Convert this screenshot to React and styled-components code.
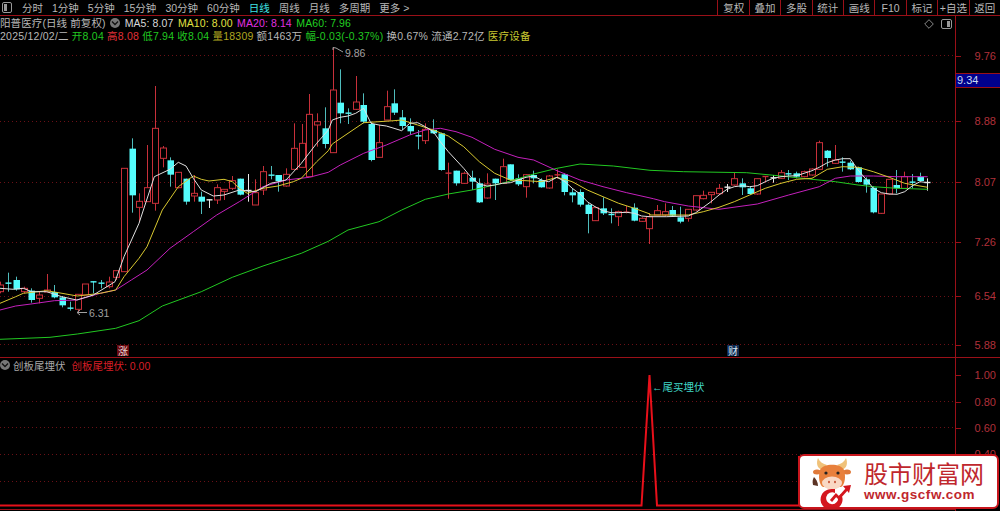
import React from 'react'
import styled, { createGlobalStyle } from 'styled-components'

const GlobalStyle = createGlobalStyle`
	html, body {
		margin: 0;
		background: #000;
	}
	body {
		font-family: 'Liberation Sans', 'Noto Sans CJK SC', sans-serif;
	}
`

const RED_LINE = '#9a1018'
const GRID = '#6a1016'
const STEP = 7.725

// candles read off the chart: [body top, body bottom, high, low, kind]
const candlesA = [
	[615, 635, 605, 640, 'r'], [608, 612, 578, 635, 'c'], [600, 628, 590, 632, 'c'], [625, 635, 620, 640, 'r'],
	[632, 660, 625, 668, 'c'], [645, 655, 635, 670, 'r'], [630, 636, 582, 636, 'r'], [636, 652, 615, 655, 'c'],
	[652, 676, 648, 682, 'c'], [683, 687, 665, 692, 'c'], [643, 688, 643, 700, 'r'], [612, 645, 612, 645, 'r'],
	[604, 608, 604, 640, 'c'], [608, 612, 600, 625, 'c'], [606, 620, 590, 625, 'r'], [572, 592, 572, 600, 'r'],
	[265, 575, 265, 575, 'r'], [206, 346, 175, 398, 'c'], [364, 382, 340, 425, 'r'], [323, 365, 195, 365, 'r'],
	[145, 370, 18, 392, 'r'], [204, 235, 198, 262, 'r'], [241, 284, 232, 320, 'c'], [277, 323, 277, 325, 'r'],
	[296, 365, 296, 374, 'c'], [340, 348, 285, 365, 'r'], [350, 365, 335, 402, 'c'], [358, 360, 358, 384, 'w'],
	[323, 360, 313, 372, 'r'], [328, 334, 328, 360, 'r'], [302, 325, 288, 330, 'r'], [296, 344, 296, 346, 'c'],
	[330, 332, 282, 365, 'w'], [338, 375, 298, 375, 'r'], [275, 330, 258, 345, 'r'], [284, 288, 258, 298, 'c'],
	[285, 303, 285, 335, 'c'], [283, 318, 265, 320, 'r'], [205, 268, 130, 268, 'r'], [190, 262, 132, 262, 'r'],
	[103, 290, 42, 290, 'r'], [125, 135, 100, 200, 'r'], [145, 192, 82, 205, 'c'],
]
const candlesB = [
	[150, 338, 22, 338, 'r'], [188, 220, 88, 250, 'c'], [218, 222, 205, 252, 'c'], [186, 208, 108, 210, 'r'],
	[195, 245, 160, 250, 'c'], [252, 360, 245, 364, 'c'], [308, 352, 255, 352, 'r'], [200, 240, 152, 240, 'r'],
	[190, 218, 148, 225, 'c'], [232, 258, 210, 270, 'c'], [258, 274, 235, 285, 'c'], [286, 291, 270, 328, 'c'],
	[268, 302, 250, 312, 'r'], [270, 280, 238, 282, 'c'], [280, 390, 278, 392, 'c'], [398, 401, 368, 476, 'r'],
	[392, 430, 392, 437, 'c'], [400, 430, 395, 432, 'r'], [413, 425, 392, 450, 'c'], [430, 487, 415, 489, 'c'],
	[432, 474, 400, 476, 'r'], [416, 430, 416, 480, 'c'], [380, 430, 356, 432, 'r'], [373, 420, 373, 422, 'c'],
	[415, 433, 403, 438, 'c'], [404, 440, 402, 473, 'r'], [405, 415, 392, 430, 'c'], [420, 442, 415, 443, 'c'],
	[408, 444, 405, 446, 'r'], [403, 407, 388, 416, 'r'], [403, 456, 400, 466, 'c'], [457, 466, 445, 487, 'c'],
	[456, 494, 448, 500, 'c'], [494, 522, 490, 580, 'c'], [503, 542, 500, 543, 'r'], [505, 520, 472, 525, 'c'],
	[522, 526, 505, 550, 'c'], [515, 530, 512, 558, 'r'], [515, 519, 498, 520, 'r'], [503, 542, 490, 544, 'c'],
	[535, 544, 532, 546, 'r'], [530, 566, 520, 612, 'r'], [512, 525, 495, 525, 'r'],
]
const candlesC = [
	[275, 285, 250, 288, 'r'], [270, 287, 258, 290, 'c'], [292, 305, 260, 310, 'c'], [268, 295, 268, 305, 'r'],
	[227, 270, 227, 272, 'r'], [226, 236, 212, 238, 'r'], [217, 224, 217, 250, 'r'], [205, 221, 192, 222, 'r'],
	[200, 203, 192, 216, 'w'], [176, 195, 158, 197, 'r'], [190, 202, 175, 225, 'c'], [205, 222, 200, 224, 'c'],
	[176, 222, 176, 224, 'r'], [168, 171, 168, 188, 'r'], [172, 175, 165, 188, 'w'], [158, 175, 150, 177, 'r'],
	[160, 163, 150, 180, 'c'], [160, 170, 155, 175, 'c'], [155, 170, 152, 172, 'r'], [147, 165, 145, 167, 'r'],
	[68, 148, 62, 150, 'r'], [92, 114, 90, 140, 'c'], [120, 130, 75, 132, 'r'], [125, 130, 112, 155, 'c'],
	[128, 148, 122, 150, 'c'], [142, 186, 140, 188, 'c'], [178, 194, 172, 218, 'c'], [203, 277, 198, 280, 'c'],
	[222, 280, 222, 282, 'r'], [178, 222, 178, 224, 'r'], [195, 205, 150, 220, 'c'], [170, 205, 155, 207, 'r'],
	[185, 190, 162, 205, 'c'], [170, 183, 158, 185, 'c'], [186, 188, 175, 212, 'w'],
]

const scaleCandles = (rows, y0) => rows.map((r) => [y0 + r[0] / 3, y0 + r[1] / 3, y0 + r[2] / 3, y0 + r[3] / 3, r[4]])
const candles = [...scaleCandles(candlesA, 80), ...scaleCandles(candlesB, 40), ...scaleCandles(candlesC, 120)]

const toPoints = (rows, x0, y0) => rows.map((p) => `${(x0 + p[0] / 3).toFixed(1)},${(y0 + p[1] / 3).toFixed(1)}`).join(' ')

const ma5 = [
	toPoints([[0, 625], [40, 628], [70, 625], [95, 635], [140, 635], [185, 650], [230, 660], [280, 645], [345, 605], [372, 530], [417, 430], [463, 290], [510, 268], [535, 247], [558, 258], [580, 295], [604, 330], [640, 348], [672, 345], [718, 330], [767, 335], [812, 310], [858, 300], [904, 250], [950, 190], [985, 150]], 0, 80),
	toPoints([[37, 240], [60, 232], [84, 228], [107, 220], [131, 205], [153, 250], [177, 255], [199, 258], [222, 265], [245, 272], [269, 250], [293, 248], [316, 260], [340, 275], [361, 305], [385, 335], [408, 360], [431, 385], [456, 415], [478, 432], [501, 438], [524, 435], [547, 430], [571, 428], [594, 420], [618, 412], [641, 408], [664, 420], [686, 425], [711, 412], [735, 425], [757, 445], [780, 462], [802, 485], [825, 500], [849, 512], [873, 518], [896, 518], [920, 517], [943, 520], [965, 528], [990, 530]], 320, 40),
	toPoints([[0, 290], [50, 290], [115, 288], [137, 278], [160, 262], [183, 245], [207, 225], [231, 208], [253, 200], [277, 197], [299, 200], [322, 197], [346, 185], [369, 175], [393, 170], [416, 168], [440, 167], [462, 160], [486, 152], [508, 142], [532, 128], [556, 120], [578, 116], [601, 116], [624, 150], [648, 178], [670, 205], [694, 218], [718, 222], [741, 223], [764, 215], [786, 198], [810, 185], [833, 188]], 650, 120),
].join(' ')

const ma10 = [
	toPoints([[0, 670], [47, 650], [70, 640], [140, 632], [186, 640], [232, 648], [301, 640], [347, 630], [372, 590], [417, 535], [441, 500], [487, 390], [535, 320], [580, 288], [604, 298], [627, 303], [672, 298], [697, 305], [718, 325], [742, 340], [789, 325], [834, 318], [880, 305], [904, 295], [950, 245], [985, 212]], 0, 80),
	toPoints([[37, 312], [84, 280], [131, 248], [177, 245], [222, 242], [245, 240], [293, 255], [340, 270], [385, 288], [431, 320], [478, 365], [524, 400], [571, 420], [618, 422], [664, 425], [711, 412], [757, 425], [802, 450], [849, 470], [896, 490], [943, 505], [990, 522]], 320, 40),
	toPoints([[0, 285], [115, 285], [160, 275], [207, 262], [253, 245], [299, 225], [346, 205], [393, 190], [440, 178], [486, 175], [532, 148], [578, 140], [624, 142], [670, 155], [718, 172], [764, 190], [810, 198], [833, 202]], 650, 120),
].join(' ')

const ma20 = [
	toPoints([[0, 690], [47, 678], [93, 672], [163, 662], [232, 660], [301, 640], [347, 630], [394, 600], [441, 570], [510, 505], [580, 455], [650, 405], [718, 365], [789, 320], [858, 300], [928, 292], [985, 277]], 0, 80),
	toPoints([[61, 375], [131, 340], [199, 315], [269, 285], [316, 270], [361, 265], [408, 275], [456, 292], [524, 328], [594, 352], [641, 360], [711, 392], [780, 420], [849, 440], [920, 458], [1000, 476]], 320, 40),
	toPoints([[44, 245], [115, 258], [207, 268], [322, 252], [416, 225], [508, 200], [556, 175], [601, 168], [670, 168], [741, 170], [833, 170]], 650, 120),
].join(' ')

const ma60 = [
	toPoints([[0, 778], [150, 772], [232, 762], [347, 745], [417, 722], [487, 678], [604, 635], [697, 592], [789, 558], [904, 520], [985, 484]], 0, 80),
	toPoints([[84, 570], [177, 545], [245, 510], [316, 478], [385, 462], [456, 450], [547, 430], [641, 402], [711, 385], [780, 372], [880, 378], [990, 391]], 320, 40),
	toPoints([[100, 155], [290, 158], [393, 168], [486, 178], [556, 185], [624, 195], [670, 200], [741, 205], [833, 208]], 650, 120),
].join(' ')

const leftTabs = ['分时', '1分钟', '5分钟', '15分钟', '30分钟', '60分钟', '日线', '周线', '月线', '多周期', '更多 >']
const rightTabs = ['复权', '叠加', '多股', '统计', '画线', 'F10', '标记', '+自选', '返回']

const Page = styled.div`
	position: relative;
	width: 1000px;
	height: 511px;
	overflow: hidden;
	background: #000;
	font-size: 10.5px;
	color: #b8b8b8;
`

const Toolbar = styled.div`
	display: flex;
	align-items: center;
	height: 15px;
	border-bottom: 1px solid ${RED_LINE};
`

const PanelIcon = styled.svg`
	display: block;
	flex: none;
`

const LeftTabs = styled.div`
	display: flex;
	gap: 9px;
	margin-left: 10px;
`

const Tab = styled.span`
	font-size: 10.5px;
	white-space: nowrap;
	color: ${(p) => (p.$active ? '#3fe4e4' : '#b8b8b8')};
`

const RightTabs = styled.div`
	display: flex;
	height: 100%;
	margin-left: auto;
`

const ToolButton = styled.div`
	display: flex;
	align-items: center;
	justify-content: center;
	width: 31.4px;
	box-sizing: border-box;
	border-left: 1px solid ${RED_LINE};
	white-space: nowrap;
`

const MainPane = styled.div`
	display: flex;
	height: 342px;
	box-sizing: border-box;
	border-bottom: 1px solid ${RED_LINE};
`

const PlotColumn = styled.div`
	display: flex;
	flex-direction: column;
	width: 955px;
	flex: none;
`

const InfoBlock = styled.div`
	position: relative;
	height: 28px;
	box-sizing: border-box;
`

const InfoRow = styled.div`
	display: flex;
	align-items: center;
	height: 13px;
	gap: ${(p) => p.$gap || 3}px;
	letter-spacing: ${(p) => p.$spacing || 0}px;
	white-space: nowrap;
`

const Value = styled.span`
	color: ${(p) => p.$color || '#b8b8b8'};
`

const RoundToggle = styled.span`
	display: flex;
	align-items: center;
	justify-content: center;
	flex: none;
	width: 10px;
	height: 10px;
	border-radius: 50%;
	background: #777;
`

const CornerIcons = styled.div`
	position: absolute;
	top: 3px;
	right: 3px;
	display: flex;
	align-items: center;
	gap: 7px;
`

const PlotSvg = styled.svg`
	display: block;
	flex: none;
`

const ChartText = styled.text`
	font-family: 'Liberation Sans', 'Noto Sans CJK SC', sans-serif;
	font-size: ${(p) => p.$size || 10.5}px;
	fill: ${(p) => p.$color || '#a0a0a0'};
`

const Axis = styled.div`
	position: relative;
	flex: 1;
	border-left: 1px solid ${RED_LINE};
`

const AxisLabel = styled.span`
	position: absolute;
	right: 4px;
	top: ${(p) => p.$y}px;
	transform: translateY(-50%);
	font-size: 11px;
	color: #b0303a;
	&::before {
		content: '';
		position: absolute;
		right: 35px;
		top: 50%;
		width: 5px;
		height: 1px;
		background: ${RED_LINE};
	}
`

const PriceTag = styled.div`
	position: absolute;
	left: 0;
	right: 0;
	top: 57px;
	height: 13px;
	line-height: 13px;
	padding-left: 1px;
	background: #00008c;
	border-top: 1px solid ${RED_LINE};
	border-bottom: 1px solid ${RED_LINE};
	color: #c8d8f0;
	font-size: 11px;
`

const LowerPane = styled.div`
	display: flex;
	height: 153px;
`

const LowerHeader = styled.div`
	display: flex;
	align-items: center;
	gap: 3px;
	height: 14px;
	white-space: nowrap;
`

const IndicatorName = styled.span`
	margin-right: 3px;
	color: #a8a8a8;
`

const Watermark = styled.div`
	position: absolute;
	left: 798px;
	top: 454px;
	display: flex;
	align-items: center;
	width: 201px;
	height: 55px;
	box-sizing: border-box;
	padding-left: 11px;
	gap: 11px;
	background: #fff;
	border: 2px solid #c8161d;
	border-radius: 6px;
`

const BrandText = styled.div`
	display: flex;
	flex-direction: column;
	color: #c0272d;
`

const BrandName = styled.div`
	font-size: 24px;
	line-height: 26px;
	white-space: nowrap;
`

const BrandUrl = styled.div`
	font-size: 13.5px;
	line-height: 13px;
	font-weight: bold;
	letter-spacing: 0.55px;
	white-space: nowrap;
`

const Chevron = () => (
	<svg width="8" height="6" viewBox="0 0 8 6">
		<path d="M1 1.5 L4 4.5 L7 1.5" fill="none" stroke="#111" strokeWidth="1.3" />
	</svg>
)

const SidePanelGlyph = () => (
	<PanelIcon width="11" height="10" viewBox="0 0 11 10">
		<rect x="0.5" y="0.5" width="10" height="9" rx="1.5" fill="none" stroke="#999" />
		<rect x="6" y="2" width="3" height="6" fill="#999" />
	</PanelIcon>
)

const Candle = ({ index, data }) => {
	const [top, bottom, high, low, kind] = data
	const x = Math.round(0.4 + index * STEP) + 0.5
	const wick = kind === 'r' ? '#c8303a' : kind === 'c' ? '#4fbcbc' : '#e8e8e8'
	const isCross = bottom - top < 2
	return (
		<g>
			<line x1={x} x2={x} y1={high} y2={low} stroke={wick} />
			{isCross ? (
				<line x1={x - 3} x2={x + 3} y1={top + 0.5} y2={top + 0.5} stroke={kind === 'c' ? '#54fcfc' : wick} strokeWidth="1.4" />
			) : kind === 'r' ? (
				<rect x={x - 3} y={top} width="6" height={bottom - top} fill="#000" stroke="#c8303a" />
			) : (
				<rect x={x - 3} y={top} width="6.5" height={bottom - top} fill="#54fcfc" />
			)}
		</g>
	)
}

const GridLine = ({ y }) => <line x1="0" x2="955" y1={y} y2={y} stroke={GRID} strokeDasharray="1 3" />

const CowLogo = () => (
	<svg width="42" height="50" viewBox="0 0 42 50" style={{ flex: 'none' }}>
		<path d="M2 28 C1 24 2 22 3 20 C5 22 7 25 7 29 Z" fill="#5b3324" />
		<path d="M11 13 C6 11 5 6 7 1 C9 5 12 7 16 8 Z" fill="#f0c27a" />
		<path d="M31 13 C36 11 37 6 35 1 C33 5 30 7 26 8 Z" fill="#f0c27a" />
		<ellipse cx="6" cy="15" rx="4" ry="2.5" fill="#e07a3a" />
		<ellipse cx="36" cy="15" rx="4" ry="2.5" fill="#e07a3a" />
		<path d="M9 13 C12 6 30 6 33 13 C35 19 34 28 30 30 L12 30 C8 28 7 19 9 13 Z" fill="#e8803c" />
		<ellipse cx="21" cy="26" rx="10" ry="6.5" fill="#f9d8c4" />
		<circle cx="15" cy="16" r="1.6" fill="#222" />
		<circle cx="27" cy="16" r="1.6" fill="#222" />
		<ellipse cx="18" cy="25" rx="1" ry="1.3" fill="#c8553a" />
		<ellipse cx="24" cy="25" rx="1" ry="1.3" fill="#c8553a" />
		<path d="M30 37 A11 10.5 0 1 1 22 32 L24 32 L24 36 A6 6 0 1 0 27 40 Z" fill="#d4161e" />
		<path d="M20 44 L25 38 L28 41 L36 32" fill="none" stroke="#d4161e" strokeWidth="2.8" />
		<path d="M32 29 L40 28 L38 36 Z" fill="#d4161e" />
	</svg>
)

const App = () => (
	<Page>
		<GlobalStyle />
		<Toolbar>
			<PanelIcon width="10" height="11" viewBox="0 0 10 11" style={{ marginLeft: 2 }}>
				<rect x="0.5" y="0.5" width="9" height="10" rx="1.5" fill="none" stroke="#999" />
				<rect x="2" y="2" width="3" height="7" fill="#999" />
			</PanelIcon>
			<LeftTabs>
				{leftTabs.map((t) => (
					<Tab key={t} $active={t === '日线'}>{t}</Tab>
				))}
			</LeftTabs>
			<RightTabs>
				{rightTabs.map((t) => (
					<ToolButton key={t}>{t}</ToolButton>
				))}
			</RightTabs>
		</Toolbar>

		<MainPane>
			<PlotColumn>
				<InfoBlock>
					<InfoRow $gap={4.5} $spacing={0.1}>
						<Value>阳普医疗(日线 前复权)</Value>
						<RoundToggle><Chevron /></RoundToggle>
						<Value $color="#d8d8d8">MA5: 8.07</Value>
						<Value $color="#e0e040">MA10: 8.00</Value>
						<Value $color="#e030e0">MA20: 8.14</Value>
						<Value $color="#20d020">MA60: 7.96</Value>
					</InfoRow>
					<InfoRow $spacing={0.24}>
						<Value>2025/12/02/二</Value>
						<Value $color="#20c820">开8.04</Value>
						<Value $color="#e03038">高8.08</Value>
						<Value $color="#20c820">低7.94</Value>
						<Value $color="#20c820">收8.04</Value>
						<Value $color="#b0a820">量18309</Value>
						<Value>额1463万</Value>
						<Value $color="#20c820">幅-0.03(-0.37%)</Value>
						<Value>换0.67%</Value>
						<Value>流通2.72亿</Value>
						<Value $color="#c8c830">医疗设备</Value>
					</InfoRow>
					<CornerIcons>
						<svg width="10" height="10" viewBox="0 0 10 10">
							<path d="M5 0.7 L9.3 5 L5 9.3 L0.7 5 Z" fill="none" stroke="#888" />
						</svg>
						<SidePanelGlyph />
					</CornerIcons>
				</InfoBlock>
				<PlotSvg width="955" height="313" viewBox="0 44 955 313">
					{[55.5, 121.5, 182.5, 242.5, 296.5, 344.5].map((y) => (
						<GridLine key={y} y={y} />
					))}
					{candles.map((c, i) => (
						<Candle key={i} index={i} data={c} />
					))}
					<polyline points={ma60} fill="none" stroke="#22c822" />
					<polyline points={ma20} fill="none" stroke="#c420bc" />
					<polyline points={ma10} fill="none" stroke="#d8c830" />
					<polyline points={ma5} fill="none" stroke="#e0e0e0" />
					<path d="M333 50 L333 47.5 L336 48 L343 52" fill="none" stroke="#a0a0a0" />
					<ChartText x="345" y="56.5">9.86</ChartText>
					<path d="M87 312.5 L77 312.5 M80 310 L77 312.5 L80 315" fill="none" stroke="#a0a0a0" />
					<ChartText x="89" y="316.5">6.31</ChartText>
					<rect x="117" y="345" width="12" height="11" fill="#6a0a10" />
					<ChartText x="118" y="354.5" $size={10} $color="#e8d8d8">涨</ChartText>
					<rect x="727" y="345" width="12" height="11" fill="#102a50" />
					<ChartText x="728" y="354.5" $size={10} $color="#d8e8f0">财</ChartText>
				</PlotSvg>
			</PlotColumn>
			<Axis>
				<AxisLabel $y={40}>9.76</AxisLabel>
				<PriceTag>9.34</PriceTag>
				<AxisLabel $y={105}>8.88</AxisLabel>
				<AxisLabel $y={166}>8.07</AxisLabel>
				<AxisLabel $y={226}>7.26</AxisLabel>
				<AxisLabel $y={280}>6.54</AxisLabel>
				<AxisLabel $y={329}>5.88</AxisLabel>
			</Axis>
		</MainPane>

		<LowerPane>
			<PlotColumn>
				<LowerHeader>
					<RoundToggle><Chevron /></RoundToggle>
					<IndicatorName>创板尾埋伏</IndicatorName>
					<Value $color="#d81e26">创板尾埋伏: 0.00</Value>
				</LowerHeader>
				<PlotSvg width="955" height="139" viewBox="0 372 955 139">
					{[401.5, 427.5, 454.5, 481.5].map((y) => (
						<GridLine key={y} y={y} />
					))}
					<line x1="0" x2="955" y1="509.5" y2="509.5" stroke={RED_LINE} />
					<polyline points="0,505.5 641.5,505.5 649.5,375 657,505.5 799,505.5 799,456" fill="none" stroke="#e8101a" strokeWidth="2" />
					<ChartText x="652" y="391" $color="#40d8c8">←尾买埋伏</ChartText>
				</PlotSvg>
			</PlotColumn>
			<Axis>
				<AxisLabel $y={17}>1.00</AxisLabel>
				<AxisLabel $y={44}>0.80</AxisLabel>
				<AxisLabel $y={70}>0.60</AxisLabel>
				<AxisLabel $y={96}>0.40</AxisLabel>
			</Axis>
		</LowerPane>

		<Watermark>
			<CowLogo />
			<BrandText>
				<BrandName>股市财富网</BrandName>
				<BrandUrl>www.gscfw.com</BrandUrl>
			</BrandText>
		</Watermark>
	</Page>
)

export default App
